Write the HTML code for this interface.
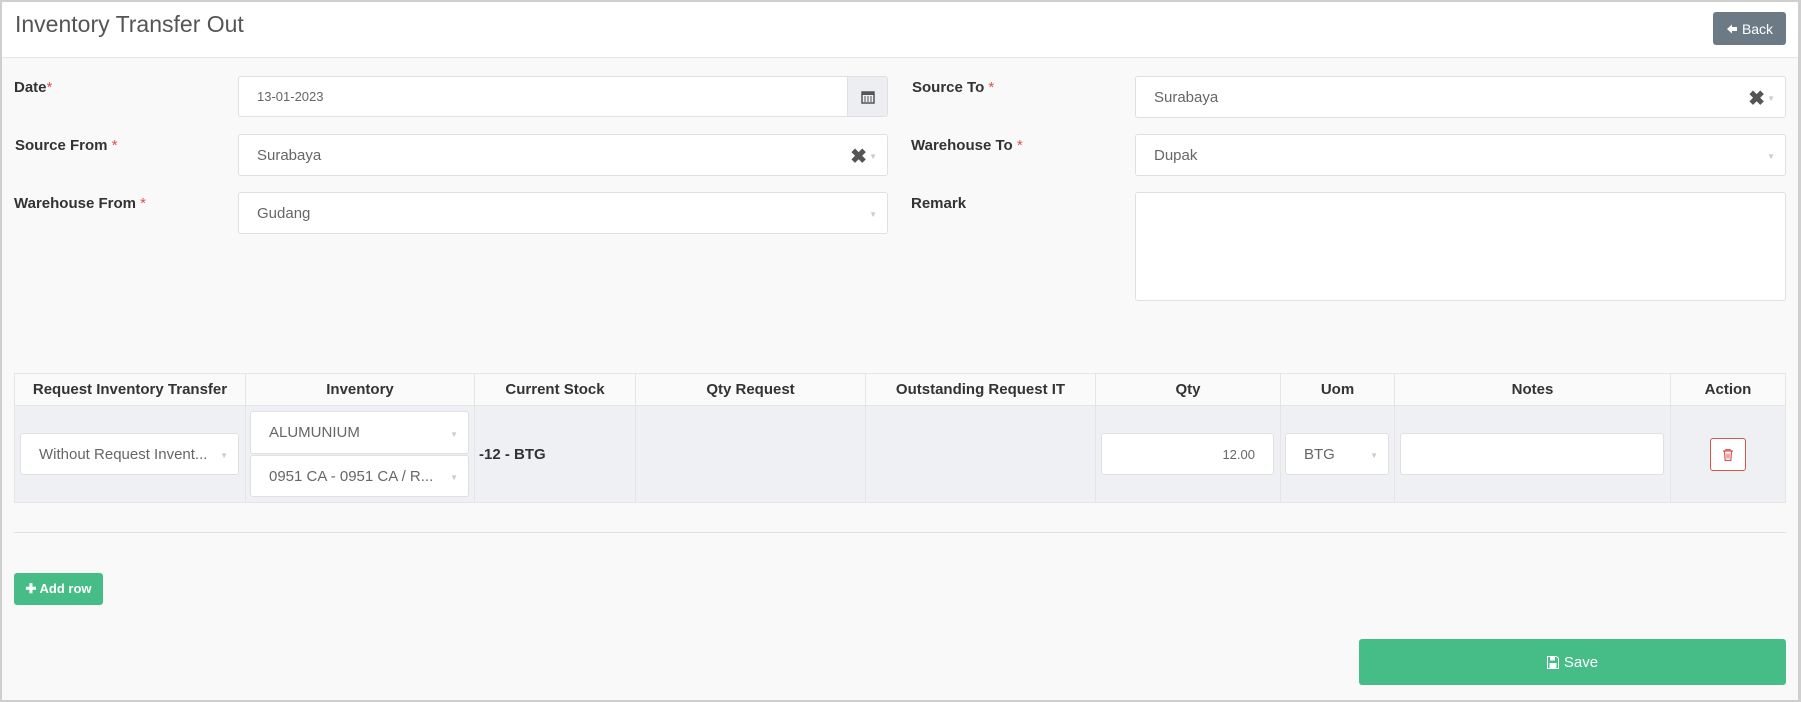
<!DOCTYPE html>
<html><head><style>
*{box-sizing:border-box;margin:0;padding:0}
body{width:1801px;height:702px;font-family:"Liberation Sans",sans-serif;background:#fff;position:relative;overflow:hidden}
.frame{position:absolute;left:0;top:0;width:1801px;height:702px;border:2px solid #cfcfcf;border-right:3px solid #cfcfcf}
.hdr{position:absolute;left:2px;top:2px;width:1796px;height:56px;background:#fff;border-bottom:1px solid #e6e6e6}
.body{position:absolute;left:2px;top:58px;width:1796px;height:642px;background:#f9f9f9}
.a{position:absolute}
h1{position:absolute;left:15px;top:11px;font-size:23px;font-weight:normal;color:#555}
.back{left:1713px;top:12px;width:73px;height:33px;background:#6c7a86;border-radius:3px;color:#fff;font-size:14px;display:flex;align-items:center;justify-content:center;gap:4px}
.lbl{font-size:15px;font-weight:bold;color:#333}
.lbl span{color:#d9534f;font-weight:normal}
.in{background:#fff;border:1px solid #e0e0e0;border-radius:3px;font-size:15px;color:#666;padding-left:18px;display:flex;align-items:center}
.dd{position:absolute;right:10px;top:50%;margin-top:-3px;font-size:8px;color:#ccc}
.x{position:absolute;right:20px;top:50%;margin-top:-11px;font-size:20px;font-weight:bold;color:#555}
table{position:absolute;left:14px;top:373px;width:1772px;border-collapse:collapse}
th{height:32px;font-size:15px;color:#333;border:1px solid #e5e5e5;background:#fafafa}
td{height:97px;background:#eff0f3;border:1px solid #e5e5e5}
.btn-g{background:#46bd87;color:#fff;border-radius:3px;display:flex;align-items:center;justify-content:center;gap:5px}
</style></head><body>
<div class="hdr"></div><div class="body"></div>
<div class="frame"></div>
<h1>Inventory Transfer Out</h1>
<div class="a back"><svg width="12" height="12" viewBox="0 0 12 12"><path d="M1 6L6 1.5V4h5v4H6v2.5z" fill="#fff"/></svg>Back</div>

<div class="a lbl" style="left:14px;top:79px">Date<span>*</span></div>
<div class="a in" style="left:238px;top:76px;width:650px;height:41px;font-size:13px">13-01-2023
 <div class="a" style="right:0;top:0;width:40px;height:39px;background:#eceef1;border-left:1px solid #e0e0e0"><svg width="14" height="14" style="position:absolute;left:13px;top:13px"><rect x="1" y="2" width="12" height="11" fill="none" stroke="#555" stroke-width="1.5"/><rect x="1" y="2" width="12" height="3" fill="#555"/><path d="M3 7h2M6 7h2M9 7h2M3 9h2M6 9h2M9 9h2M3 11h2M6 11h2M9 11h2" stroke="#555"/></svg></div></div>
<div class="a lbl" style="left:15px;top:137px">Source From <span>*</span></div>
<div class="a in" style="left:238px;top:134px;width:650px;height:42px">Surabaya<span class="x">✖</span><span class="dd">▼</span></div>
<div class="a lbl" style="left:14px;top:195px">Warehouse From <span>*</span></div>
<div class="a in" style="left:238px;top:192px;width:650px;height:42px">Gudang<span class="dd">▼</span></div>

<div class="a lbl" style="left:912px;top:79px">Source To <span>*</span></div>
<div class="a in" style="left:1135px;top:76px;width:651px;height:42px">Surabaya<span class="x">✖</span><span class="dd">▼</span></div>
<div class="a lbl" style="left:911px;top:137px">Warehouse To <span>*</span></div>
<div class="a in" style="left:1135px;top:134px;width:651px;height:42px">Dupak<span class="dd">▼</span></div>
<div class="a lbl" style="left:911px;top:195px">Remark</div>
<div class="a in" style="left:1135px;top:192px;width:651px;height:109px"></div>

<table><tr>
<th style="width:231px">Request Inventory Transfer</th><th style="width:229px">Inventory</th><th style="width:161px">Current Stock</th><th style="width:230px">Qty Request</th><th style="width:230px">Outstanding Request IT</th><th style="width:185px">Qty</th><th style="width:114px">Uom</th><th style="width:276px">Notes</th><th>Action</th>
</tr><tr><td></td><td></td><td></td><td></td><td></td><td></td><td></td><td></td><td></td></tr></table>
<div class="a in" style="left:20px;top:433px;width:219px;height:42px">Without Request Invent...<span class="dd">▼</span></div>
<div class="a in" style="left:250px;top:411px;width:219px;height:43px">ALUMUNIUM<span class="dd">▼</span></div>
<div class="a in" style="left:250px;top:455px;width:219px;height:42px">0951 CA - 0951 CA / R...<span class="dd">▼</span></div>
<div class="a" style="left:479px;top:446px;font-size:15px;font-weight:bold;color:#333">-12 - BTG</div>
<div class="a in" style="left:1101px;top:433px;width:173px;height:42px;justify-content:flex-end;padding-right:18px;font-size:13px">12.00</div>
<div class="a in" style="left:1285px;top:433px;width:104px;height:42px">BTG<span class="dd">▼</span></div>
<div class="a in" style="left:1400px;top:433px;width:264px;height:42px"></div>
<div class="a" style="left:1710px;top:438px;width:36px;height:33px;border:1px solid #d9534f;border-radius:3px;background:#fff"><svg width="10" height="12" style="position:absolute;left:12px;top:10px"><path d="M0 2h10M3 2V0.5h4V2M1.5 2.5l.7 9h5.6l.7-9" fill="none" stroke="#d9534f" stroke-width="1.2"/><path d="M4 4.5v5M6 4.5v5" stroke="#d9534f"/></svg></div>

<div class="a" style="left:14px;top:532px;width:1772px;height:1px;background:#e0e0e0"></div>
<div class="a btn-g" style="left:14px;top:573px;width:89px;height:32px;font-size:13px;font-weight:bold">✚ Add row</div>
<div class="a btn-g" style="left:1359px;top:639px;width:427px;height:46px;font-size:15px"><svg width="12" height="13" viewBox="0 0 12 13"><path d="M0.5 0.5h9l2 2v10h-11z" fill="none" stroke="#fff"/><rect x="3" y="1" width="5" height="3.5" fill="#fff"/><rect x="2.5" y="7" width="7" height="5" fill="#fff"/></svg>Save</div>
</body></html>
